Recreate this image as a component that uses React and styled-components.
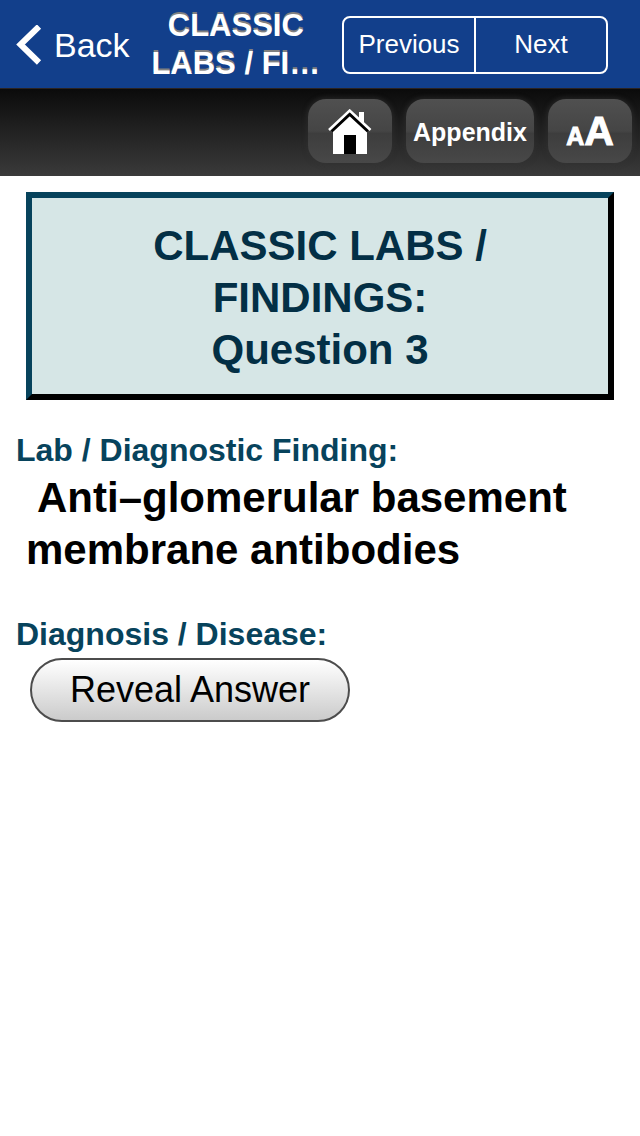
import React from "react";
import styled, { createGlobalStyle } from "styled-components";

const GlobalStyle = createGlobalStyle`
  * { box-sizing: border-box; }
  body {
    margin: 0;
    background: #fff;
    color: #000;
    font-family: "Liberation Sans", Arial, sans-serif;
  }
  button { font-family: inherit; margin: 0; cursor: pointer; }
`;

const NavBar = styled.header`
  display: flex;
  align-items: center;
  height: 88px;
  padding: 2px 32px 0 16px;
  background: #123f8b;
  color: #fff;
`;

const BackButton = styled.button`
  display: flex;
  align-items: center;
  gap: 12px;
  padding: 0;
  border: 0;
  background: none;
  color: inherit;
  font-size: 34px;
  line-height: 40px;
`;

const NavTitle = styled.div`
  flex: 1;
  font-size: 31px;
  font-weight: bold;
  line-height: 38px;
  text-align: center;
  white-space: nowrap;
  text-shadow: 0 -2px 0 #808080;
`;

const Segments = styled.div`
  display: flex;
  width: 266px;
  height: 58px;
  border: 2px solid #fff;
  border-radius: 8px;
`;

const Segment = styled.button`
  flex: 1;
  padding: 0 0 2px;
  border: 0;
  background: none;
  color: inherit;
  font-size: 26px;
  line-height: 32px;

  & + & { border-left: 2px solid #fff; }
`;

const Toolbar = styled.nav`
  display: flex;
  justify-content: flex-end;
  align-items: flex-start;
  gap: 14px;
  height: 88px;
  padding: 10px 8px;
  border-top: 1px solid #2b2320;
  background: linear-gradient(#0b0b0b, #3a3a3a);
`;

const ToolButton = styled.button`
  display: flex;
  justify-content: center;
  align-items: ${(p) => (p.$baseline ? "baseline" : "center")};
  width: ${(p) => (p.$wide ? 128 : 84)}px;
  height: 64px;
  padding: ${(p) => (p.$baseline ? "8px 0 0" : "2px 0 0")};
  border: 0;
  border-radius: 18px;
  background: linear-gradient(#505050, #454545 50%, #3d3d3d 54%, #484848);
  box-shadow: 0 0 4px 2px rgba(50, 50, 50, 0.5);
  color: #fff;
  font-size: 25px;
  font-weight: bold;
  line-height: 32px;
`;

const Letter = styled.span`
  font-size: ${(p) => (p.$large ? 41 : 25)}px;
  line-height: 48px;
  -webkit-text-stroke: 1px #fff;
`;

const Content = styled.main`
  padding: 16px;
`;

const Heading = styled.h1`
  margin: 0 10px 30px;
  padding: 22px 100px 18px;
  border: 6px solid;
  border-color: #07435c #000 #000 #07435c;
  background: #d6e6e6;
  color: #032f45;
  font-size: 42px;
  line-height: 52px;
  text-align: center;
`;

const Label = styled.h2`
  margin: 0;
  padding-bottom: 2px;
  color: #07435c;
  font-size: 32px;
  line-height: 40px;
`;

const Finding = styled.p`
  margin: 0 10px 38px;
  font-size: 42px;
  font-weight: bold;
  line-height: 52px;
  text-indent: 11px;
`;

const RevealButton = styled.button`
  display: block;
  width: 320px;
  height: 64px;
  margin: 2px 14px;
  padding: 0;
  border: 2px solid #4c4c4c;
  border-radius: 32px;
  background: linear-gradient(#fff, #cbcbcb);
  color: #000;
  font-size: 36px;
  line-height: 40px;
`;

function Chevron() {
  return (
    <svg width="26" height="40" viewBox="0 0 26 40" aria-hidden="true">
      <path d="M23 1.5 L4.5 19.5 L23 37.5" fill="none" stroke="#fff" strokeWidth="6" />
    </svg>
  );
}

function House() {
  return (
    <svg width="44" height="46" viewBox="0 0 44 46" aria-hidden="true">
      <path d="M31 3h5v13h-5z" fill="#fff" />
      <path d="M5 19 L21.7 5 L39 19 V45 H5z" fill="#fff" />
      <path d="M3.5 22 L21.7 5 L40 22" fill="none" stroke="#000" strokeWidth="3.4" />
      <path d="M1 21 L21.7 1.6 L42.5 21" fill="none" stroke="#fff" strokeWidth="2.6" />
      <path d="M16 26h12v19H16z" fill="#000" />
    </svg>
  );
}

export default function App() {
  return (
    <>
      <GlobalStyle />
      <NavBar>
        <BackButton type="button">
          <Chevron />
          Back
        </BackButton>
        <NavTitle>
          CLASSIC
          <br />
          LABS / FI…
        </NavTitle>
        <Segments>
          <Segment type="button">Previous</Segment>
          <Segment type="button">Next</Segment>
        </Segments>
      </NavBar>
      <Toolbar>
        <ToolButton type="button" aria-label="Home">
          <House />
        </ToolButton>
        <ToolButton type="button" $wide>Appendix</ToolButton>
        <ToolButton type="button" $baseline>
          <Letter>A</Letter>
          <Letter $large>A</Letter>
        </ToolButton>
      </Toolbar>
      <Content>
        <Heading>
          CLASSIC LABS / FINDINGS:
          <br />
          Question 3
        </Heading>
        <Label>Lab / Diagnostic Finding:</Label>
        <Finding>Anti–glomerular basement membrane antibodies</Finding>
        <Label>Diagnosis / Disease:</Label>
        <RevealButton type="button">Reveal Answer</RevealButton>
      </Content>
    </>
  );
}
